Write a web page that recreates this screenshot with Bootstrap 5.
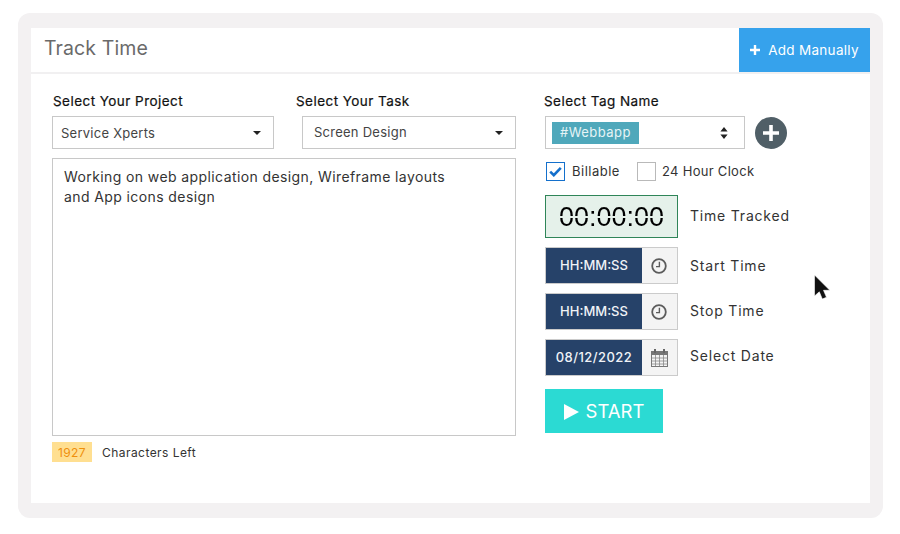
<!DOCTYPE html>
<html lang="en">
<head>
  <meta charset="UTF-8" />
  <title>Track Time</title>
  <meta name="viewport" content="width=device-width, initial-scale=1" />
  <link href="https://cdn.jsdelivr.net/npm/bootstrap@5.3.0/dist/css/bootstrap.min.css" rel="stylesheet" />
  <style>
    html, body { height: 534px; overflow: hidden; }
    body { background: #fff; font-family: "Inter", "Noto Sans", sans-serif; color: #222; padding: 13px 17px 16px 18px; position: relative; }
    .track-shell { background: #f3f1f2; border-radius: 12px; padding: 15px 13px; height: 505px; }
    .track-panel { background: #fff; height: 475px; }
    .track-head { height: 46px; border-bottom: 2px solid #f1f0f1; }
    .track-title { font-size: 19.5px; color: #6a6a6a; padding: 6px 0 0 13px; letter-spacing: .1px; }
    .add-btn { width: 131px; height: 44px; background: #36a2ec; color: #fff; font-size: 13.5px; letter-spacing: .3px; border: 0; border-radius: 0; padding: 0; }
    .add-btn:hover { background: #36a2ec; color: #fff; }
    .track-body { padding: 18px 0 0 21px; }
    .left-col { width: 464px; }
    .right-col { width: 300px; margin-left: 28px; }
    .field-label { font-size: 13.5px; font-weight: 400; letter-spacing: .45px; color: #111; height: 24px; line-height: 18px; margin: 0; -webkit-text-stroke: .2px #111; }
    .project-col { width: 222px; }
    .project-col .field-label { padding-left: 1px; }
    .task-col { width: 220px; margin-left: 22px; }
    .task-col .plain-select { width: 214px; margin-left: 6px; }
    .plain-select { height: 33px; border: 1px solid #c8c8c8; border-radius: 0; font-size: 13px; letter-spacing: .25px; color: #444; padding: 2px 24px 0 8px; box-shadow: none;
      background-image: url("data:image/svg+xml,%3Csvg xmlns='http://www.w3.org/2000/svg' width='8' height='4'%3E%3Cpath d='M0 0h8L4 4z' fill='%23222'/%3E%3C/svg%3E");
      background-size: 8px 4px; background-position: right 12px center; }
    .task-col .plain-select { padding: 0 24px 0 11px; }
    .note-box { height: 278px; margin-top: 9px; border: 1px solid #c8c8c8; border-radius: 0; font-size: 14px; letter-spacing: .4px; line-height: 20px; color: #333; padding: 8px 11px; resize: none; box-shadow: none; }
    .count-row { margin-top: 6px; font-size: 12px; letter-spacing: .45px; color: #333; }
    .count-chip { width: 40px; height: 20px; background: #ffdf91; color: #ef8f0c; margin-right: 10px; font-size: 12px; padding-top: 1px; }
    .count-text { padding-top: 2px; }
    .tag-box { width: 200px; height: 33px; border: 1px solid #c8c8c8; padding: 0 0 0 6px; margin-left: 1px; }
    .tag-chip { width: 87px; height: 22px; background: #4fa8bb; color: #e6f4f6; font-size: 13px; letter-spacing: .45px; padding-left: 8px; }
    .tag-add { width: 32px; height: 32px; border-radius: 50%; background: #505f67; margin-left: 10px; }
    .check-row { margin: 13px 0 0 2px; font-size: 13px; letter-spacing: .5px; color: #333; height: 19px; }
    .tick { width: 19px; height: 19px; border: 1px solid #b9b9b9; margin-right: 7px; }
    .tick-on { border-color: #1470cc; }
    .bill-text { width: 65px; }
    .hour-text { margin-left: -1px; letter-spacing: .3px; }
    .timer-row { margin: 14px 0 0 1px; }
    .timer-box { width: 133px; height: 43px; background: #e5f1ea; border: 1px solid #2f8558; }
    /* gap through the digits so they read as lcd segments */
    .timer-digits { font-family: "Liberation Sans", sans-serif; font-size: 27px; line-height: 30px; color: transparent;
      background: linear-gradient(#000 0 48%, transparent 48% 52%, #000 52%); -webkit-background-clip: text; background-clip: text; }
    .row-label { font-size: 14px; color: #333; margin-left: 12px; letter-spacing: .8px; }
    .lift-1 { margin-bottom: 2px; }
    .lift-2 { margin-bottom: 4px; }
    .time-row { margin: 9px 0 0 1px; }
    .time-box { width: 133px; height: 37px; border: 1px solid #cbcbcb; }
    .time-val { width: 96px; background: #264269; color: #f0f3f7; font-size: 13px; font-weight: 500; }
    .date-val { letter-spacing: .45px; }
    .time-icon { width: 35px; background: #f4f4f4; }
    .clock-glyph { margin-right: 2px; }
    .start-btn { width: 118px; height: 44px; background: #2bdad3; color: #fff; border: 0; border-radius: 0; font-size: 18.5px; padding: 1px 0 0; margin: 13px 0 0 1px; gap: 7px; }
    .start-btn:hover { background: #2bdad3; color: #fff; }
    .mouse-arrow { position: absolute; left: 813px; top: 274px; }
  </style>
</head>
<body>

<div class="track-shell">
  <div class="track-panel">
    <!-- Header -->
    <div class="track-head d-flex justify-content-between">
      <div class="track-title">Track Time</div>
      <button type="button" class="btn add-btn d-flex align-items-center justify-content-center gap-2">
        <svg width="10" height="10" viewBox="0 0 10 10"><path d="M3.8 0h2.4v3.8H10v2.4H6.2V10H3.8V6.2H0V3.8h3.8z" fill="#fff"/></svg>
        Add Manually
      </button>
    </div>

    <div class="track-body d-flex">
      <!-- Left side -->
      <div class="left-col">
        <div class="d-flex">
          <div class="project-col">
            <label class="field-label d-block">Select Your Project</label>
            <select class="form-select plain-select"><option>Service Xperts</option></select>
          </div>
          <div class="task-col">
            <label class="field-label d-block">Select Your Task</label>
            <select class="form-select plain-select"><option>Screen Design</option></select>
          </div>
        </div>
        <textarea class="form-control note-box">Working on web application design, Wireframe layouts
and App icons design</textarea>
        <div class="count-row d-flex align-items-center">
          <span class="count-chip d-flex align-items-center justify-content-center">1927</span>
          <span class="count-text">Characters Left</span>
        </div>
      </div>

      <!-- Right side -->
      <div class="right-col">
        <label class="field-label d-block">Select Tag Name</label>
        <div class="d-flex align-items-center">
          <div class="tag-box d-flex align-items-center justify-content-between">
            <span class="tag-chip d-flex align-items-center">#Webbapp</span>
            <svg class="me-3" width="8" height="12" viewBox="0 0 8 12"><path d="M4 0l3.6 4.6H.4zM4 12L.4 7.4h7.2z" fill="#222"/></svg>
          </div>
          <div class="tag-add d-flex align-items-center justify-content-center">
            <svg width="16" height="16" viewBox="0 0 16 16"><path d="M6.2 0h3.6v6.2H16v3.6H9.8V16H6.2V9.8H0V6.2h6.2z" fill="#fff"/></svg>
          </div>
        </div>

        <div class="check-row d-flex align-items-center">
          <span class="tick tick-on d-flex align-items-center justify-content-center">
            <svg width="13" height="11" viewBox="0 0 13 11"><path d="M1.2 5.6l3.6 3.6 7-7.4" fill="none" stroke="#1470cc" stroke-width="2.6"/></svg>
          </span>
          <span class="bill-text">Billable</span>
          <span class="tick"></span>
          <span class="hour-text">24 Hour Clock</span>
        </div>

        <div class="timer-row d-flex align-items-center">
          <div class="timer-box d-flex align-items-center justify-content-center"><span class="timer-digits">00:00:00</span></div>
          <span class="row-label lift-1">Time Tracked</span>
        </div>

        <div class="time-row d-flex align-items-center">
          <div class="time-box d-flex">
            <div class="time-val d-flex align-items-center justify-content-center">HH:MM:SS</div>
            <div class="time-icon d-flex align-items-center justify-content-center">
              <svg class="clock-glyph" width="16" height="16" viewBox="0 0 16 16"><circle cx="8" cy="8" r="6.8" fill="none" stroke="#5c5c5c" stroke-width="1.8"/><path d="M8.4 3.8v4.8H5" fill="none" stroke="#5c5c5c" stroke-width="1.4"/></svg>
            </div>
          </div>
          <span class="row-label">Start Time</span>
        </div>

        <div class="time-row d-flex align-items-center">
          <div class="time-box d-flex">
            <div class="time-val d-flex align-items-center justify-content-center">HH:MM:SS</div>
            <div class="time-icon d-flex align-items-center justify-content-center">
              <svg class="clock-glyph" width="16" height="16" viewBox="0 0 16 16"><circle cx="8" cy="8" r="6.8" fill="none" stroke="#5c5c5c" stroke-width="1.8"/><path d="M8.4 3.8v4.8H5" fill="none" stroke="#5c5c5c" stroke-width="1.4"/></svg>
            </div>
          </div>
          <span class="row-label lift-1">Stop Time</span>
        </div>

        <div class="time-row d-flex align-items-center">
          <div class="time-box d-flex">
            <div class="time-val date-val d-flex align-items-center justify-content-center">08/12/2022</div>
            <div class="time-icon d-flex align-items-center justify-content-center">
              <svg width="17" height="18" viewBox="0 0 17 18">
                <rect x=".5" y="2.5" width="16" height="15" fill="none" stroke="#777"/>
                <rect x=".5" y="2.5" width="16" height="3.5" fill="#777"/>
                <path d="M.5 9h16M.5 12h16M.5 15h16M4.5 6v11M8.5 6v11M12.5 6v11" stroke="#888" stroke-width=".8"/>
                <path d="M4 0v4M13 0v4" stroke="#666" stroke-width="2"/>
              </svg>
            </div>
          </div>
          <span class="row-label lift-2">Select Date</span>
        </div>

        <button type="button" class="btn start-btn d-flex align-items-center justify-content-center">
          <svg width="15" height="16" viewBox="0 0 15 16"><path d="M0 0l15 8-15 8z" fill="#fff"/></svg>
          START
        </button>
      </div>
    </div>
  </div>
</div>

<!-- Mouse pointer -->
<svg class="mouse-arrow" width="20" height="28" viewBox="0 0 20 28">
  <path d="M1.5 1v21l4.8-4.2 3 7.2 4.2-1.7-3-7h6.3z" fill="#111" stroke="#fff" stroke-width=".6"/>
</svg>

</body>
</html>
